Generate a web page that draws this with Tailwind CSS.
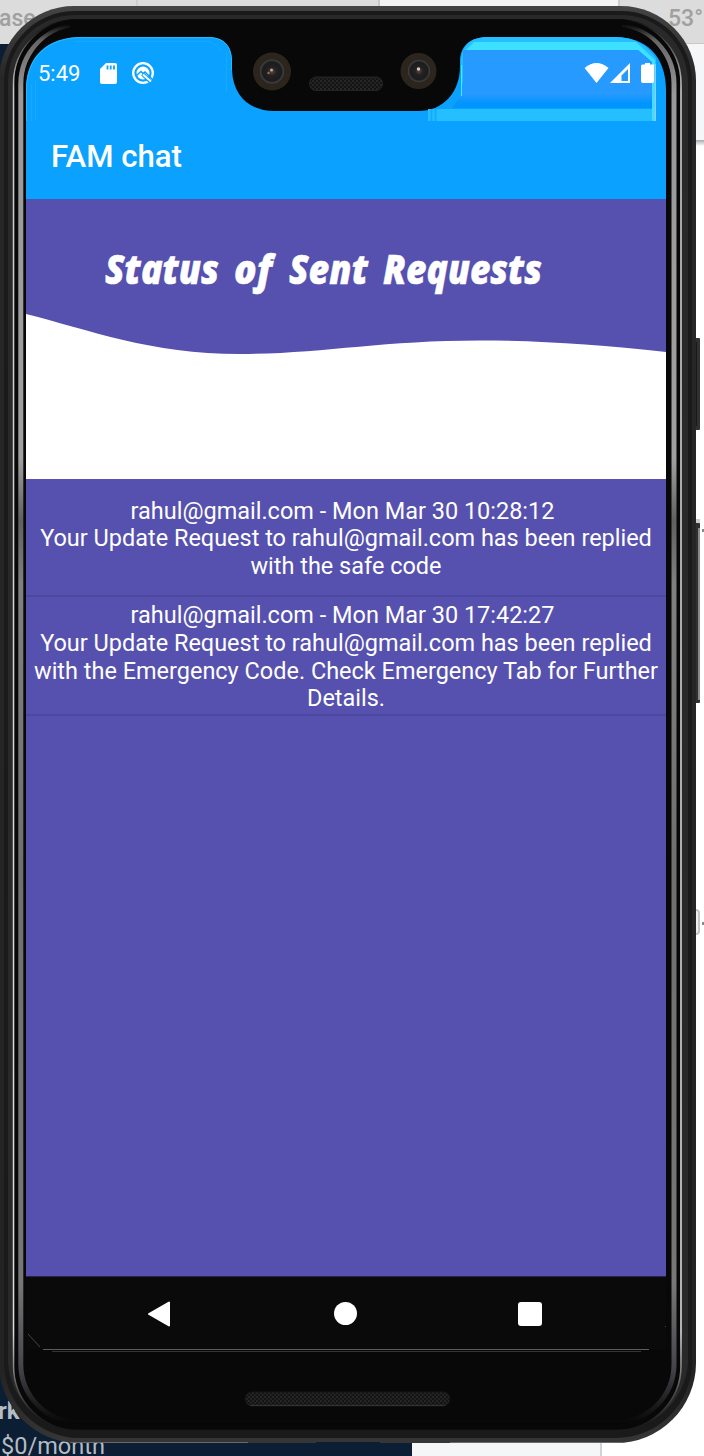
<!DOCTYPE html>
<html lang="en">
<head>
<meta charset="utf-8">
<title>FAM chat</title>
<script src="https://cdn.jsdelivr.net/npm/@tailwindcss/browser@4"></script>
</head>
<body class="bg-white overflow-hidden">
<div class="relative w-[704px] h-[1456px] overflow-hidden font-['Roboto',sans-serif]">

  <!-- desktop and device frame -->
  <svg class="absolute inset-0" width="704" height="1456" viewBox="0 0 704 1456" font-family="Roboto, sans-serif">
    <defs>
      <linearGradient id="shade" x1="0" x2="0" y1="0" y2="1"><stop offset="0" stop-color="#aaa"/><stop offset="1" stop-color="#fff"/></linearGradient>
      <linearGradient id="shell" gradientUnits="userSpaceOnUse" x1="0" x2="0" y1="6" y2="1443">
        <stop offset="0" stop-color="#444"/><stop offset=".05" stop-color="#272727"/><stop offset=".95" stop-color="#232323"/><stop offset="1" stop-color="#363636"/>
      </linearGradient>
      <linearGradient id="rim" gradientUnits="userSpaceOnUse" x1="0" x2="0" y1="24" y2="1424">
        <stop offset="0" stop-color="#060606"/><stop offset=".012" stop-color="#666"/><stop offset=".05" stop-color="#999"/><stop offset=".31" stop-color="#a0a0a0"/><stop offset=".355" stop-color="#606060"/><stop offset=".4" stop-color="#808080"/><stop offset=".6" stop-color="#707070"/><stop offset=".9" stop-color="#777"/><stop offset=".96" stop-color="#44444a"/><stop offset="1" stop-color="#060606"/>
      </linearGradient>
      <linearGradient id="rim2" gradientUnits="userSpaceOnUse" x1="0" x2="0" y1="20" y2="1430">
        <stop offset="0" stop-color="#101010"/><stop offset=".05" stop-color="#ccc"/><stop offset=".93" stop-color="#ddd"/><stop offset=".97" stop-color="#555"/><stop offset="1" stop-color="#101010"/>
      </linearGradient>
      <pattern id="mesh" width="4" height="4" patternUnits="userSpaceOnUse"><rect width="4" height="4" fill="#141414"/><circle cx="1" cy="1" r=".8" fill="#3c3c3c"/><circle cx="3" cy="3" r=".8" fill="#333"/></pattern>
      <radialGradient id="lens"><stop offset="0" stop-color="#5a4840"/><stop offset=".35" stop-color="#242221"/><stop offset=".8" stop-color="#1b1c1e"/><stop offset="1" stop-color="#474747"/></radialGradient>
      <linearGradient id="glow" x1="0" x2="0" y1="0" y2="1"><stop offset="0" stop-color="#269aff"/><stop offset=".76" stop-color="#269aff"/><stop offset=".92" stop-color="#0095ff"/><stop offset="1" stop-color="#0095ff"/></linearGradient>
    </defs>
    <rect width="704" height="44" fill="#dcdcdc"/>
    <rect x="136" width="2" height="8" fill="#cfcfcf"/>
    <rect x="380" width="238" height="8" fill="#f5f5f5"/><rect x="378" width="2" height="8" fill="#c8c8c8"/>
    <rect x="618" width="2" height="10" fill="#ccc"/>
    <rect x="0" y="44" width="60" height="100" fill="#0c1e33"/>
    <rect x="640" y="43" width="64" height="97" fill="#f5f6f8"/><rect x="640" y="43" width="64" height="1" fill="#c8c8c8"/>
    <rect x="690" y="140" width="14" height="6" fill="url(#shade)"/>
    <text x="-1" y="26" font-size="23" fill="#a0a0a0" font-weight="500">ase</text>
    <text x="668" y="26" font-size="23" fill="#a0a0a0" font-weight="500">53°</text>
    <rect x="0" y="1340" width="412" height="116" fill="#0c1e33"/>
    <rect x="412" y="1430" width="188" height="26" fill="#f4f6f8"/><rect x="600" y="1430" width="2" height="26" fill="#cfd4d8"/>
    <text x="-2" y="1419" font-size="24" fill="#b4bcc4" font-weight="700">rk</text>
    <text x="1" y="1454" font-size="23.500" fill="#b4bcc4" textLength="104">$0/month</text>

    <!-- side buttons -->
    <rect x="690" y="338" width="10" height="92" rx="1" fill="#303030"/><rect x="695" y="342" width="2" height="84" fill="#191919"/>
    <rect x="690" y="519" width="10" height="20" fill="#ccc"/>
    <rect x="690" y="523" width="10" height="180" rx="1" fill="#303030"/><rect x="698" y="528" width="2" height="172" fill="#888"/>
    <rect x="702" y="529" width="2" height="3" fill="#888"/><rect x="702" y="922" width="2" height="3" fill="#888"/>
    <rect x="688" y="910" width="11" height="24" rx="3" fill="#eee" stroke="#c4c4c4" stroke-width="2"/>

    <!-- shell -->
    <path d="M74 6H621A75 75 0 0 1 696 81V1363A80 80 0 0 1 616 1443H79A80 80 0 0 1 -1 1363V81A75 75 0 0 1 74 6Z" fill="url(#shell)"/>
    <path d="M74 11H621A71 71 0 0 1 692 82V1363A76 76 0 0 1 616 1438H79A76 76 0 0 1 4 1363V82A71 71 0 0 1 74 11Z" fill="#1a1a1a"/>
    <path d="M74 15H621A67 67 0 0 1 688 82V1363A72 72 0 0 1 616 1430H79A72 72 0 0 1 8 1363V82A67 67 0 0 1 74 15Z" fill="#292929"/>
    <path d="M70 1442.500H248M450 1442.500H622" stroke="#6d6868"/>
    <path d="M316 1443h64" stroke="#0c1e33" stroke-width="2"/>
    <rect x="12.500" y="19" width="669" height="1410" rx="64" fill="#080808"/>
    <rect x="13.500" y="20" width="667.500" height="1409" rx="63" fill="none" stroke="url(#rim2)" stroke-width="1.600"/>
    <rect x="15" y="19.500" width="664" height="1410" rx="62" fill="#080808"/>
    <rect x="20.800" y="26" width="653.200" height="1396" rx="58" fill="none" stroke="url(#rim)" stroke-width="5"/>
    <rect x="24" y="26.500" width="647" height="1394" rx="56" fill="#080808"/>
    <path d="M70 22H622V30H70Z" fill="#080808"/>

    <!-- display behind the status bar -->
    <path d="M26 200V90C26 55 48 37 82 37H208C224 37 232 46 232 62V70C233 97 251 111 274 111H418C444 111 460 92 460 66V62C460 46 470 37 488 37H615C646 37 666 56 666 90V200Z" fill="#0aa1ff"/>
    <path d="M26.500 121V90C26.500 57 48 37.500 82 37.500H208C224 37.500 231.500 46 231.500 62V70" fill="none" stroke="#20bdfc"/>
    <path d="M31.500 121V85M35.500 121V80M75 41.500H210L222 50M226.500 52V92" fill="none" stroke="#15a9ff"/>
    <path d="M461 62C461 46 470 37 488 37H615C635 37 648 46 656 58V121H428V109H652V62L638 50H463V96H461Z" fill="#25beff"/>
    <path d="M474 42H636L655 60V121H652V62L638 50H466Z" fill="#3ee0ff"/>
    <path d="M463 50H638L652 62V108H452Q461 98 463 80Z" fill="url(#glow)"/>
    <path d="M461.500 65V96" stroke="#38f1ff"/><path d="M655.500 64V121" stroke="#a9bfff"/>
    <path d="M431.500 109V121M435.500 109V121" stroke="#15aaff" stroke-width="2"/>

    <!-- cameras and earpiece -->
    <circle cx="272" cy="71.500" r="19" fill="#2b251e"/><circle cx="272" cy="71.500" r="12" fill="url(#lens)"/><circle cx="271.500" cy="70" r="1.500" fill="#c9a190"/><circle cx="268.500" cy="73" r="1.200" fill="#8e6d60"/>
    <circle cx="418.500" cy="71" r="18" fill="#2b251e"/><circle cx="419" cy="71" r="11" fill="url(#lens)"/><circle cx="418.500" cy="69" r="1.700" fill="#d8cbc0"/>
    <rect x="309.500" y="77" width="73" height="13.500" rx="6.500" fill="url(#mesh)" stroke="#252525"/>

    <rect x="245" y="1392" width="205" height="14" rx="7" fill="url(#mesh)" stroke="#151515"/>
    <path d="M250 1405.500H445" stroke="#333"/>
  </svg>

  <!-- app screen -->
  <div class="relative ml-[26px] w-[640px] pt-[37px] text-white">
    <div class="h-[84px] flex items-start justify-between pt-[24px] pl-[12px] pr-[12px]">
      <div class="flex items-center h-6">
        <span class="text-[22px] leading-6 w-[62px] pt-[2px]">5:49</span>
        <svg width="17" height="21" viewBox="0 0 17 21"><path d="M6 0H15Q17 0 17 2V19Q17 21 15 21H2Q0 21 0 19V6Z" fill="#fff"/><path d="M7.500 2.500v4M10.700 2.500v4M14 2.500v4" stroke="#0aa1ff" stroke-width="1.800"/></svg>
        <svg class="ml-[14px]" width="24" height="24" viewBox="0 0 24 24" fill="none"><circle cx="12" cy="12" r="9.800" stroke="#fff" stroke-width="2.300"/><circle cx="12" cy="12" r="6.500" fill="#fff"/><path d="M5.500 14.500L10 10.500L12 12.500L14 11L21 18" stroke="#0aa1ff" stroke-width="1.500"/><path d="M11.500 13L20 21" stroke="#0aa1ff" stroke-width="4"/><path d="M12 13.500L20 20.500" stroke="#fff" stroke-width="2"/></svg>
      </div>
      <svg width="70" height="24" viewBox="0 0 70 24"><path d="M.6 7Q12.500-3 24.500 7L12.500 22Z" fill="#fff"/><path d="M46 2V22H26Z" fill="#fff"/><path d="M44 8V20H37.500V14.500Z" fill="#269aff"/><path d="M57 5Q57 3.500 58.500 3.500H61V2H66V3.500H70V20Q70 22 68 22H59Q57 22 57 20Z" fill="#fff"/></svg>
    </div>
    <header class="h-[78px] bg-[#0aa1ff] pl-[25px] flex items-center pb-[6px]">
      <h1 class="text-[31.200px] font-medium leading-none">FAM chat</h1>
    </header>
    <main class="h-[1077px] bg-[#5651af]">
      <svg class="block" width="640" height="280" viewBox="26 199 640 280">
        <rect x="26" y="199" width="640" height="280" fill="#fff"/>
        <path d="M26 199H666V352C600 345 540 340.500 480 340.500C380 340.500 320 354 240 354C150 354 90 330 26 314Z" fill="#5651af"/>
        <path d="M26 199.500H666" stroke="#4c55b5"/>
        <g fill="#fff" stroke="#fff" stroke-width=".5" font-family="'Open Sans', sans-serif" font-size="41.500" font-weight="800" font-style="italic">
          <text x="105" y="284" textLength="114" lengthAdjust="spacingAndGlyphs">Status</text>
          <text x="234" y="284" textLength="38" lengthAdjust="spacingAndGlyphs">of</text>
          <text x="289" y="284" textLength="79" lengthAdjust="spacingAndGlyphs">Sent</text>
          <text x="383" y="284" textLength="159" lengthAdjust="spacingAndGlyphs">Requests</text>
        </g>
      </svg>
      <ul class="text-center text-[23.480px] leading-[27.600px] whitespace-nowrap">
        <li class="h-[118px] pt-[4px] border-b-2 border-[#4d489f] flex flex-col justify-center"><p class="pr-[7px]">rahul@gmail.com - Mon Mar 30 10:28:12</p><p>Your Update Request to rahul@gmail.com has been replied</p><p>with the safe code</p></li>
        <li class="h-[119px] pt-[4px] border-b-2 border-[#4d489f] flex flex-col justify-center"><p class="pr-[7px]">rahul@gmail.com - Mon Mar 30 17:42:27</p><p>Your Update Request to rahul@gmail.com has been replied</p><p>with the Emergency Code. Check Emergency Tab for Further</p><p>Details.</p></li>
      </ul>
    </main>
    <nav class="h-[73px] bg-[#0a0a0a] border-t border-[#25234a] flex items-center pl-[121px] pt-px">
      <svg width="24" height="26" viewBox="0 0 24 26"><path d="M22 1.500V24.500L2 13Z" fill="#fff" stroke="#fff" stroke-width="2" stroke-linejoin="round"/></svg>
      <span class="ml-[163px] size-[23px] rounded-full bg-white"></span>
      <span class="ml-[161px] size-[24px] rounded-[3px] bg-white"></span>
    </nav>
    <svg class="absolute left-0 top-[1320px]" width="640" height="34" viewBox="26 1320 640 34" fill="none"><path d="M43 1349.500H649" stroke="#5c5c5c"/><path d="M52 1351.500H641" stroke="#343434"/><path d="M28 1334L40 1347M665.500 1326v1" stroke="#444"/></svg>
  </div>
</div>
</body>
</html>
